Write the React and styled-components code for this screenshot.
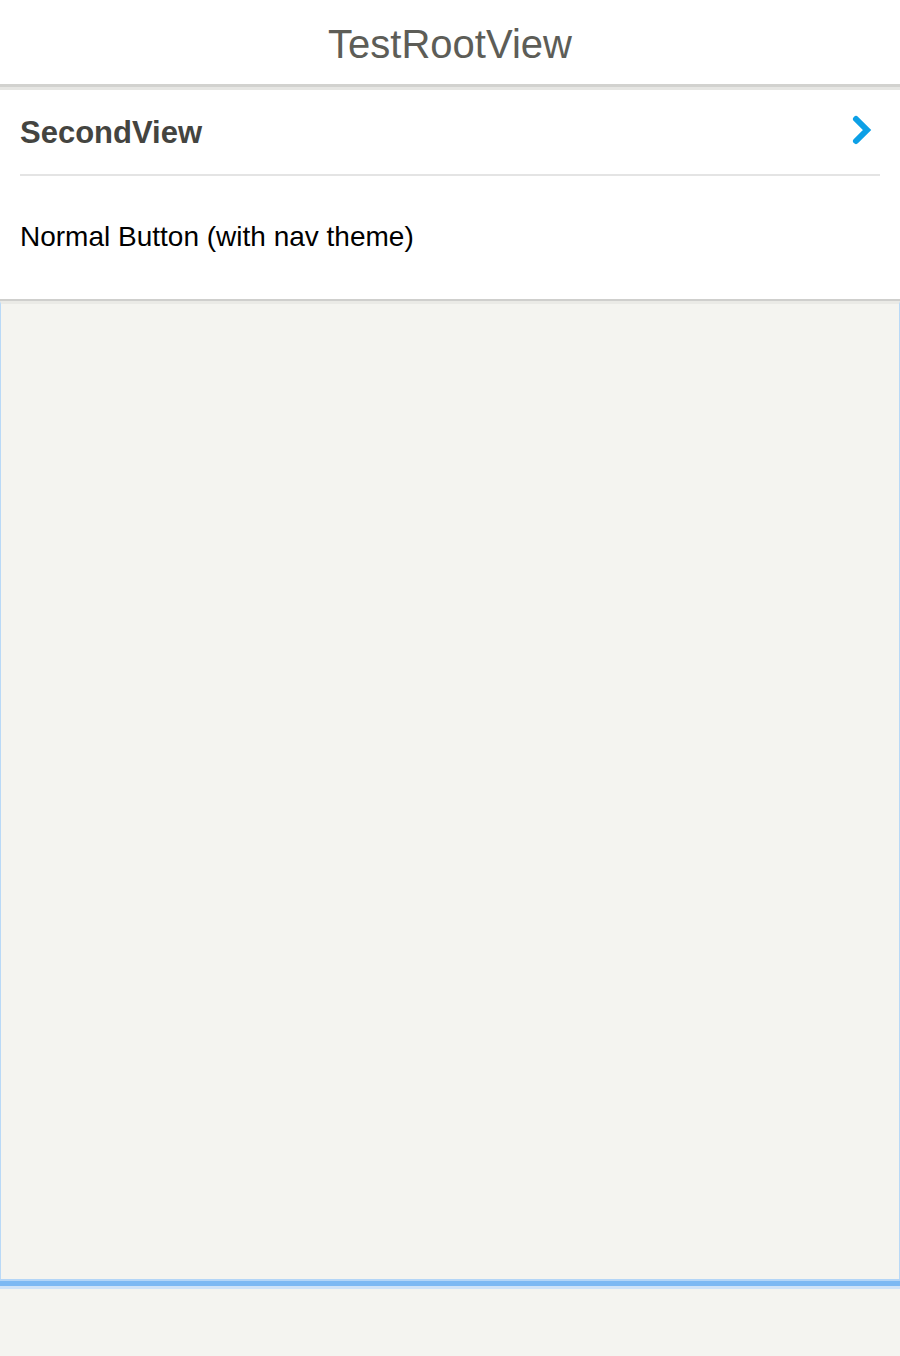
import React from "react";
import styled, { createGlobalStyle } from "styled-components";

const Global = createGlobalStyle`
  html, body {
    margin: 0;
    padding: 0;
    background: #f4f4f0;
    font-family: "Liberation Sans", Arial, sans-serif;
  }
  * { box-sizing: border-box; }
`;

const Page = styled.div`
  display: flex;
  flex-direction: column;
  min-height: 1356px;
  background: #f4f4f0;
`;

const Header = styled.header`
  height: 87px;
  padding-top: 21px;
  background: #fff;
  border-bottom: 3px solid #d2d2cf;
  text-align: center;
`;

const Title = styled.h1`
  margin: 0;
  font-size: 40px;
  font-weight: 400;
  line-height: 46px;
  color: #5d5d57;
`;

const List = styled.ul`
  list-style: none;
  margin: 0;
  padding: 0 20px;
  background: #fff;
  border-top: 3px solid #e6e6e3;
  border-bottom: 2px solid #cfcfcd;
`;

const Row = styled.li`
  height: ${(p) => p.$h}px;
  padding-top: ${(p) => p.$pt}px;
  display: flex;
  justify-content: space-between;
  align-items: flex-start;
  border-bottom: ${(p) => (p.$divider ? "2px solid #e4e4e4" : "none")};
`;

const RowLabel = styled.span`
  font-size: ${(p) => (p.$bold ? 31 : 28)}px;
  font-weight: ${(p) => (p.$bold ? 700 : 400)};
  color: ${(p) => (p.$bold ? "#444440" : "#000")};
  line-height: normal;
`;

const Chevron = styled.svg`
  margin-top: -1px;
  margin-right: 6px;
  width: 24px;
  height: 32px;
  flex-shrink: 0;
`;

const Panel = styled.div`
  height: 978px;
  border-left: 1px solid #b9d9f7;
  border-right: 1px solid #b9d9f7;
  border-top: 3px solid #eaeae6;
  background: #f4f4f0;
`;

const FocusBar = styled.div`
  height: 10px;
  background: #7db9f3;
  border-top: 2px solid #b3d5f7;
  border-bottom: 3px solid #cfe3f8;
`;

const Rest = styled.div`
  flex: 1;
  background: #f4f4f0;
`;

export default function App() {
  return (
    <>
      <Global />
      <Page>
        <Header>
          <Title>TestRootView</Title>
        </Header>
        <List>
          <Row $h={86} $pt={25} $divider>
            <RowLabel $bold>SecondView</RowLabel>
            <Chevron viewBox="0 0 24 32">
              <path
                d="M6 5 L17 16 L6 27"
                fill="none"
                stroke="#0da0e6"
                strokeWidth="6"
                strokeLinecap="round"
                strokeLinejoin="miter"
              />
            </Chevron>
          </Row>
          <Row $h={123} $pt={45}>
            <RowLabel>Normal Button (with nav theme)</RowLabel>
          </Row>
        </List>
        <Panel />
        <FocusBar />
        <Rest />
      </Page>
    </>
  );
}
